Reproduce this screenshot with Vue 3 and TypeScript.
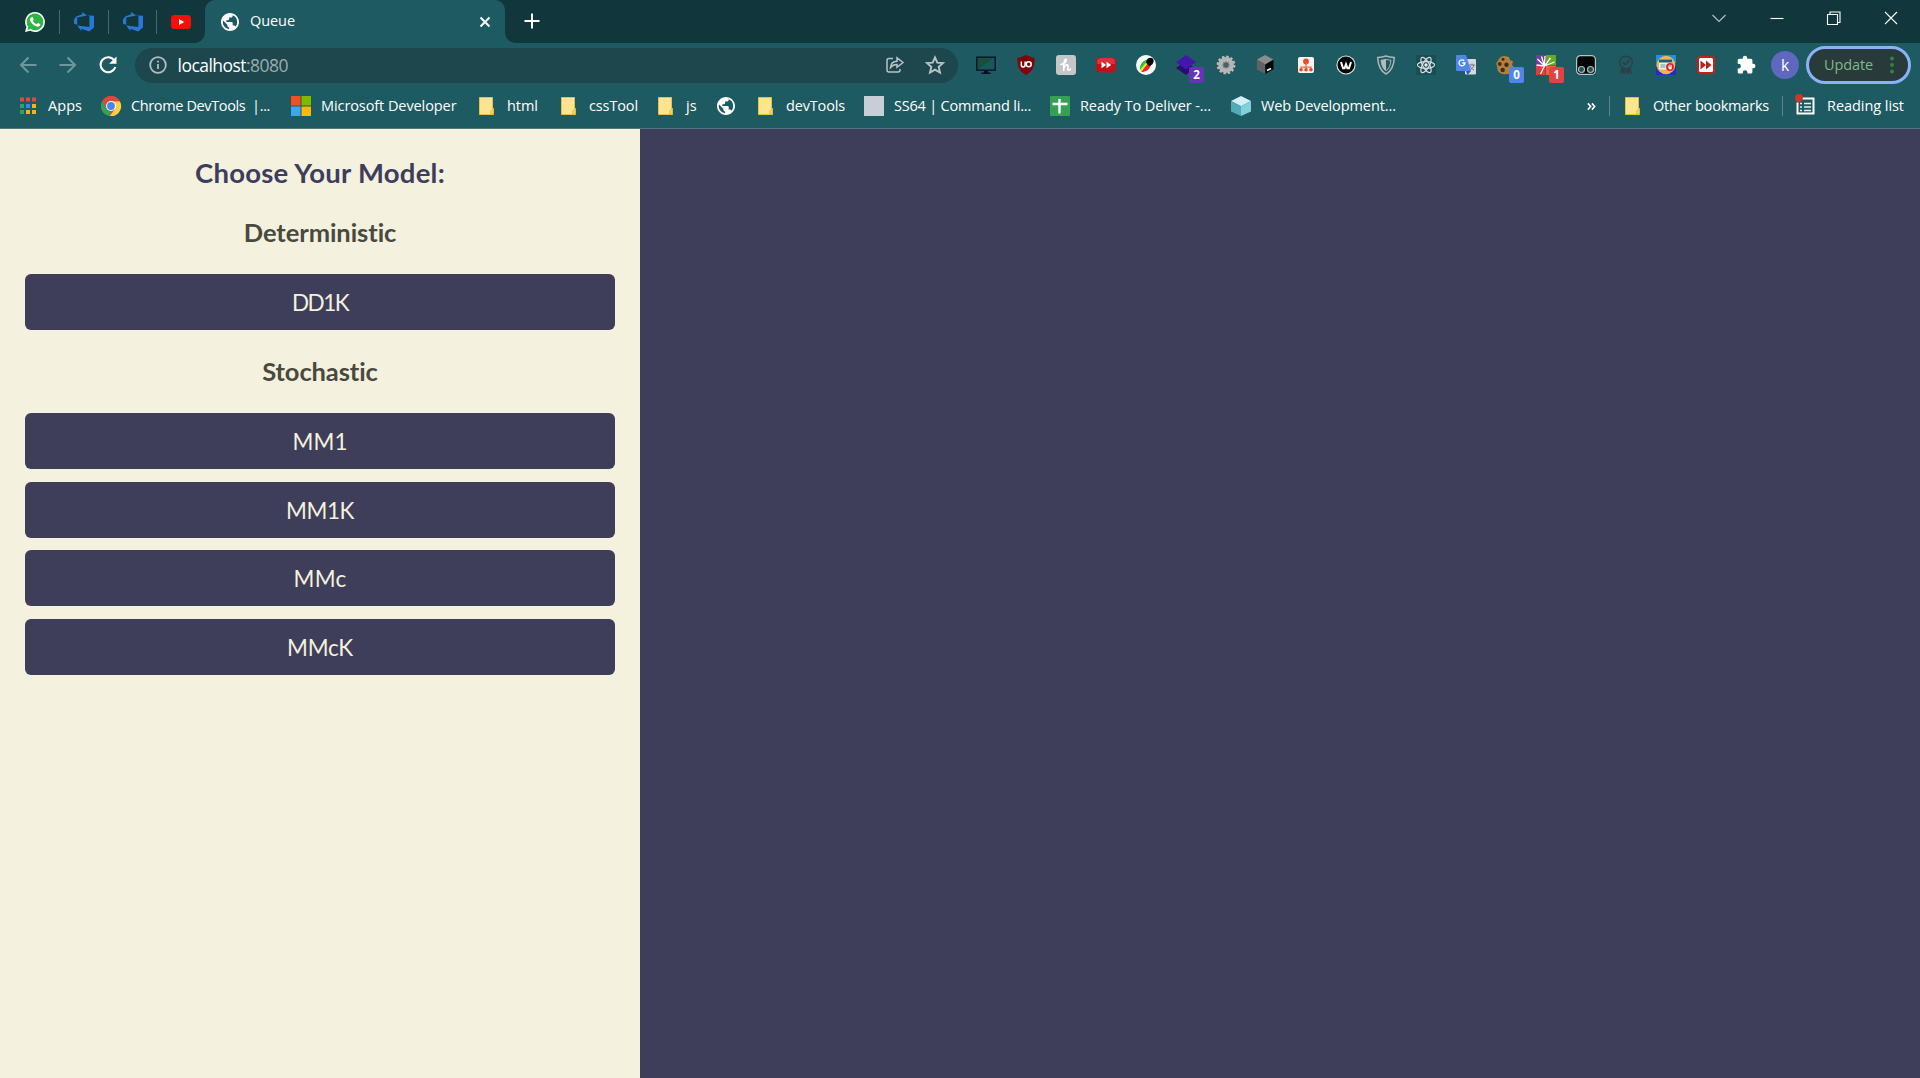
<script setup lang="ts">
import type { Directive } from 'vue'

interface Bookmark {
  icon: string
  label: string
  width: number
  text: number
}

interface Extension {
  name: string
  badge?: string
  tone?: string
}

// Spreads a label's letters so that it takes up its designed width.
const vFit: Directive<HTMLElement, number> = {
  mounted(el, binding) {
    if (!binding.value) return
    const natural = el.getBoundingClientRect().width
    const count = (el.textContent ?? '').length
    if (count > 0) el.style.letterSpacing = `${(binding.value - natural) / count}px`
  },
}

const globe =
  '<path transform="translate(-.8 -.8) scale(.9)" d="M12 2C6.480 2 2 6.480 2 12s4.480 10 10 10 10-4.480 10-10S17.520 2 12 2zm-1 17.930c-3.950-.490-7-3.850-7-7.930 0-.620.080-1.210.210-1.790L9 15v1c0 1.100.900 2 2 2v1.930zm6.900-2.540c-.260-.810-1-1.390-1.900-1.390h-1v-3c0-.550-.450-1-1-1H8v-2h2c.550 0 1-.450 1-1V7h2c1.100 0 2-.900 2-2v-.410c2.930 1.190 5 4.060 5 7.410 0 2.080-.800 3.970-2.100 5.390z" fill="#fff"/>'

const devops =
  '<path d="M0 7.4 2.2 4.6 8.2 2.3V0l4.9 3.6-9.9 2v7.1L0 11.8ZM20 3.7v11.7L15.2 19.4 7.4 16.8v2.5L3.2 13.4l12.2 1.5V4.3L13.1 3.6Z" fill="#2878d8"/>'

const icons: Record<string, string> = {
  whatsapp:
    '<path d="M10 0a10 10 0 1 1-4.8 18.8L0 20l1.4-5A10 10 0 0 1 10 0Z" fill="#f7fff7"/><path d="M10.1 1.5a8.4 8.4 0 1 1-4.5 15.6l-3.2.8.9-3.1A8.4 8.4 0 0 1 10.1 1.5Z" fill="#2db742"/><path d="M6.7 5.2c.5-.3 1-.2 1.2.3l.8 1.8c.1.4-.7 1.2-.8 1.4.9 1.8 2 2.7 3.8 3.5.3 0 1-1.3 1.4-1.2l2 1c.5.3.1 1.6-.5 2.1-2 1.5-5.300-.2-7.100-2-2.200-2.200-3.200-4.500-1.900-6.200Z" fill="#fff"/>',
  devops,
  youtube: '<rect y="3" width="20" height="14" rx="3.500" fill="#f80d0d"/><path d="m8 7 5.300 3L8 13Z" fill="#fff"/>',
  globe,
  apps:
    '<path d="M2 1.500h4v4H2z M8 1.500h4v4H8z M14 1.500h4v4h-4z" fill="#e8453c"/><path d="M2 8h4v4H2z M2 14h4v4H2z" fill="#35a057"/><path d="M8 8h4v4H8z" fill="#3b83ee"/><path d="M14 8h4v4h-4z M8 14h4v4H8z M14 14h4v4h-4z" fill="#f6b50c"/>',
  chrome:
    '<circle cx="10" cy="10" r="10" fill="#e04a3f"/><path d="M1.300 5 5.700 12.500 10 15 8.900 20A10 10 0 0 1 1.300 5Z" fill="#34a155"/><path d="M10 5.200h8.800A10 10 0 0 1 8.900 20l5.300-7.600Z" fill="#fdd13d"/><path d="M10 5.200h8.800a10 10 0 0 0-17.500-.200L5.700 12.500Z" fill="#dd493e"/><circle cx="10" cy="10" r="4.900" fill="#fff"/><circle cx="10" cy="10" r="3.900" fill="#4285f4"/>',
  microsoft:
    '<path d="M0 0h9.500v9.500H0Z" fill="#f25022"/><path d="M10.500 0H20v9.500h-9.500Z" fill="#7fba00"/><path d="M0 10.500h9.500V20H0Z" fill="#3aa7f2"/><path d="M10.500 10.500H20V20h-9.500Z" fill="#ffb900"/>',
  folder:
    '<path d="M2.500 1.500h13v11h1v6h-14Z" fill="#fde48f" stroke="#e0c44a"/><path d="M13.800 17.800v-3l2.700-2.400v5.600Z" fill="#f7d75c" stroke="#d9b93b" stroke-width=".8"/>',
  blank: '<rect width="20" height="20" fill="#c8ced8"/>',
  plus: '<rect width="20" height="20" rx="1" fill="#36a154"/><path d="M9.500 3v14.500M2.500 8h15" stroke="#fff" stroke-width="2.400"/>',
  cube: '<path d="m10 0 10 5-10 5.200L0 5Z" fill="#d3eff7"/><path d="m0 5 10 5.200V20L0 15.500Z" fill="#52acb6"/><path d="m20 5-10 5.200V20l10-4.500Z" fill="#82d0dc"/>',
  reading:
    '<path d="M5 2.500h13.500v15H2.500v-11" fill="none" stroke="#fff" stroke-width="2"/><path d="M5 7.500h2m2 0h7M5 11h2m2 0h7M5 14.500h2m2 0h7" stroke="#e8f0f0" stroke-width="1.600"/><circle cx="4" cy="2" r="3.900" fill="#d23428"/>',
  monitor:
    '<rect x=".8" y="2.200" width="18.400" height="13" fill="#1b5756" stroke="#0d1530" stroke-width="1.500"/><path d="M2 3.500h15.500L2 14Z" fill="#174f3c"/><path d="M8 15.500h4v2h2.500V19h-9v-1.500H8Z" fill="#0d0d2b"/>',
  ublock:
    '<path d="M10 0c2.500 1.500 5.500 2.400 8.500 2.800C19 11 17 16 10 20 3 16 1 11 1.500 2.800 4.500 2.400 7.500 1.500 10 0Z" fill="#800407"/><path d="M5.300 6.500v3.600q0 1.900 1.900 1.900t1.900-1.900V6.500" fill="none" stroke="#fff" stroke-width="1.500"/><circle cx="12.700" cy="9.300" r="2.500" fill="none" stroke="#fff" stroke-width="1.500"/>',
  honey:
    '<rect width="20" height="20" rx="3" fill="#c4c6c7"/><path d="M5 9.500C8.500 9 11 6 10.300 4.500 9.300 3.300 8 6 7.800 9.500V15.500" fill="none" stroke="#fff" stroke-width="1.600" stroke-linecap="round"/><path d="M7.900 12.500C9 10 11.500 8.800 12 10.500c.3 1.500-1 4.600.6 4.800.8 0 1.400-.5 1.900-1.200" fill="none" stroke="#fff" stroke-width="1.600" stroke-linecap="round"/>',
  forward:
    '<rect y="2.500" width="20" height="15" rx="4" fill="#c21219"/><path d="M1 7q0-4 4-4h10q4 0 4 4v2H1Z" fill="#dc3138"/><path d="m5.500 6.700 4.700 3.300-4.700 3.300Zm5 0 4.700 3.300-4.700 3.300Z" fill="#fff"/>',
  picker:
    '<circle cx="10" cy="10" r="10" fill="#fff"/><path d="M3.800 14C4 9 6.500 6 11 4.500L12.500 7 5 15.500Z" fill="#2dc23a"/><path d="M4 14.800 11.500 6l1.500 2-7.500 9Z" fill="#f4e51d"/><path d="m5.300 17 7.200-9.500 2.500 2.500c-1.500 4.500-5 7-9.700 7Z" fill="#e8242d"/><path d="M10 7.500C10.500 3.500 14 1.500 17.200 3.700 18.500 7 16.800 10.300 13 11Z" fill="#0b0b0b"/>',
  layers:
    '<path d="m0 13 10-7 8 7-8 7Z" fill="#2b0a72"/><path d="m10 0 10 7-10 7.500L0 7.300Z" fill="#4516ad"/>',
  gear:
    '<circle cx="10" cy="11" r="8.300" fill="none" stroke="#38494a" stroke-width="2" stroke-dasharray="2.300 2.040"/><circle cx="10" cy="10" r="8.300" fill="none" stroke="#bcbcbc" stroke-width="2.200" stroke-dasharray="2.500 1.840"/><circle cx="10" cy="10" r="5.600" fill="none" stroke="#b5b5b5" stroke-width="4.600"/><circle cx="10" cy="10" r="3" fill="#496165" stroke="#858585" stroke-width="1"/>',
  terminal:
    '<path d="m9 0 8.500 4.500L9.300 9.500 1 4.500Z" fill="#8c8c8c"/><path d="m1 4.500 8.300 5V19L1 14.500Z" fill="#626262"/><path d="M9.300 9.500 17.500 4.500v9.700L9.300 19Z" fill="#080808"/><path d="m11 15.500 4-2" stroke="#fff" stroke-width="1.500"/>',
  sitemap:
    '<rect x="2" y="2" width="16" height="16" rx="2" fill="#f7f4f0"/><circle cx="10" cy="6.500" r="2.900" fill="#e64c28"/><path d="M10 8v6M5 14.500v-2.300h10v2.300" fill="none" stroke="#ec6a49" stroke-width="1.200"/><circle cx="5" cy="14.800" r="1.800" fill="#e64c28"/><circle cx="10" cy="14.800" r="1.800" fill="#e64c28"/><circle cx="15" cy="14.800" r="1.800" fill="#e64c28"/>',
  whats:
    '<circle cx="10" cy="10" r="9.600" fill="#dfe6e6"/><circle cx="10" cy="10" r="8.500" fill="#050505"/><path d="m5 7 2 6.200h1.600l1.400-4 1.400 4H13L15 7" fill="none" stroke="#fff" stroke-width="2"/>',
  shield:
    '<path d="M10 1c2.500 1 5 1.400 8.300 1.400C18 11 15.500 16 10 19 4.500 16 2 11 1.700 2.400 5 2.400 7.500 2 10 1Z" fill="none" stroke="#aeb5b7" stroke-width="1.500"/><path d="M10 4.300c1.700.6 3.300.800 5 .9C14.500 10.500 13 13.700 10 15.700 7 13.700 5.500 10.500 5 5.200 6.700 5.100 8.300 4.900 10 4.300Z" fill="none" stroke="#aeb5b7"/><path d="M10 4.300v11.400C7 13.700 5.500 10.500 5 5.200Z" fill="#b4babc"/>',
  react:
    '<rect width="20" height="20" fill="#1b4d54"/><g fill="none" stroke="#d6dede" stroke-width="1.200"><ellipse cx="10" cy="10" rx="8.600" ry="3.300"/><ellipse cx="10" cy="10" rx="8.600" ry="3.300" transform="rotate(60 10 10)"/><ellipse cx="10" cy="10" rx="8.600" ry="3.300" transform="rotate(120 10 10)"/></g><circle cx="10" cy="10" r="1.700" fill="#e8eeee"/>',
  translate:
    '<rect x="9" y="4" width="11" height="15.500" rx="1" fill="#d6d8da"/><path d="M13 10h6m-3-1.500V10m2 0c-.6 2.700-2.500 4-4.500 5M14 11c.7 1.900 2 3 4 4" fill="none" stroke="#6c7c82"/><path d="M1 0h9l5 16H1q-1 0-1-1V1q0-1 1-1Z" fill="#4d86ed"/><path d="m10 16 5 0-3.500 4Z" fill="#3458b2"/><path d="M8.200 5.800A3 3 0 1 0 9 8H6.300" fill="none" stroke="#fff" stroke-width="1.300"/>',
  cookie:
    '<path d="M8.500 1 13 2l1 3 3 1.200L16 10l3 3c0 4-4.200 6.500-8.500 6C5 20 1 17 1.200 12 0 10 0 7 2 6 3 2.600 5.300 1 8.500 1Z" fill="#b67f3e"/><circle cx="7" cy="4.200" r="1.500" fill="#3e2b20"/><circle cx="3.800" cy="9" r="1.900" fill="#3e2b20"/><circle cx="10.500" cy="9.700" r="2.200" fill="#3e2b20"/><circle cx="6.700" cy="15" r="2.200" fill="#3e2b20"/>',
  burst:
    '<path d="M0 0h9.500v10.500H0Z" fill="#6e3fa0"/><path d="M10 0h10v10.500H10Z" fill="#68a824"/><path d="M0 11h9.500v9H0Z" fill="#e53b3b"/><path d="M10 11h10v9H10Z" fill="#ea6438"/><path d="m8.500 11-7-7m7 7-3-9.500m3 9.500L9 1m-.5 10 6-8m-6 8 10-4m-10 4-8-1m8 1-4 8" stroke="#fff" stroke-width="1.300"/>',
  monkey:
    '<rect x=".6" y=".6" width="18.800" height="18.800" rx="4" fill="#050505" stroke="#b5c4c5" stroke-width="1.200"/><circle cx="5.500" cy="14.500" r="3" fill="#1e5057" stroke="#a9babb" stroke-width="1.200"/><circle cx="14.500" cy="14.500" r="3" fill="#1e5057" stroke="#a9babb" stroke-width="1.200"/>',
  ribbon:
    '<circle cx="10" cy="7.500" r="6.300" fill="none" stroke="#303f45" stroke-width="1.500"/><path d="m7 7.500 2.200 2.200L13.500 5" fill="none" stroke="#303f45" stroke-width="1.500"/><path d="m5.500 12-1.500 7 3-1.300L9 19.500l1-5 1 5 2-1.800 3 1.300-1.500-7-4.500 1.800Z" fill="#303f45"/>',
  blocker:
    '<path d="M0 0h20v20H0Z" fill="#1e8fe5"/><path d="M0 12 20 8v12H0Z" fill="#1f2fc4"/><circle cx="10" cy="10" r="9.300" fill="#efb450"/><rect x="3" y="4.500" width="13" height="10" rx="1" fill="#f4efdf"/><path d="M3 4.500h13v3H3Z" fill="#265f6c"/><path d="M4.500 9h5v4h-5Z" fill="#9cc8cb"/><circle cx="14" cy="12" r="3.900" fill="#df1d22"/><path d="M12.800 12.500v-2m1.200 1.500V9.500m1.300 2.500v-2m-2.500 2.500h2.500v1.500h-2Z" stroke="#fff" fill="#fff" stroke-width=".9"/>',
  skip:
    '<rect x=".7" y=".7" width="18.600" height="18.600" rx="4" fill="#b72520"/><rect x="3" y="3" width="14" height="14" rx="1.500" fill="#fff"/><path d="m4.500 5.500 5.500 4.500-5.500 4.500Zm5.500 0 5.500 4.500-5.500 4.500Z" fill="#b72520"/>',
  puzzle:
    '<path d="M1.700 5.300q0-1.500 1.500-1.500h3.600V3a2.200 2.200 0 0 1 4.400 0v.8h3.700q1.500 0 1.500 1.500v3.500h.8a2.200 2.200 0 0 1 0 4.500h-.8V17q0 1.500-1.500 1.500h-3.400v-.8a2.400 2.400 0 0 0-4.800 0v.8H3.200Q1.700 18.500 1.700 17v-3.400h.8a2.400 2.400 0 0 0 0-4.800h-.8Z" fill="#fff"/>',
}

const pinned: string[] = ['whatsapp', 'devops', 'devops', 'youtube']

const bookmarks: Bookmark[] = [
  { icon: 'apps', label: 'Apps', width: 83, text: 34 },
  { icon: 'chrome', label: 'Chrome DevTools  |...', width: 190, text: 139 },
  { icon: 'microsoft', label: 'Microsoft Developer', width: 186, text: 135.5 },
  { icon: 'folder', label: 'html', width: 82, text: 31 },
  { icon: 'folder', label: 'cssTool', width: 97, text: 49 },
  { icon: 'folder', label: 'js', width: 60, text: 11 },
  { icon: 'globe', label: '', width: 40, text: 0 },
  { icon: 'folder', label: 'devTools', width: 108, text: 59 },
  { icon: 'blank', label: 'SS64 | Command li...', width: 186, text: 137 },
  { icon: 'plus', label: 'Ready To Deliver -...', width: 181, text: 131 },
  { icon: 'cube', label: 'Web Development...', width: 180, text: 135 },
]

const extensions: Extension[] = [
  { name: 'monitor' },
  { name: 'ublock' },
  { name: 'honey' },
  { name: 'forward' },
  { name: 'picker' },
  { name: 'layers', badge: '2', tone: 'violet' },
  { name: 'gear' },
  { name: 'terminal' },
  { name: 'sitemap' },
  { name: 'whats' },
  { name: 'shield' },
  { name: 'react' },
  { name: 'translate' },
  { name: 'cookie', badge: '0', tone: 'blue' },
  { name: 'burst', badge: '1', tone: 'red' },
  { name: 'monkey' },
  { name: 'ribbon' },
  { name: 'blocker' },
  { name: 'skip' },
  { name: 'puzzle' },
]

const deterministic = [{ name: 'DD1K', text: 56 }]
const stochastic = [
  { name: 'MM1', text: 55 },
  { name: 'MM1K', text: 68 },
  { name: 'MMc', text: 53 },
  { name: 'MMcK', text: 66 },
]
</script>

<template>
  <div class="window">
    <header class="chrome">
      <div class="tabstrip">
        <div v-for="(tab, i) in pinned" :key="i" class="pinned">
          <svg class="icon" viewBox="0 0 20 20" v-html="icons[tab]"></svg>
        </div>
        <div class="tab">
          <svg class="icon" viewBox="0 0 20 20" v-html="icons.globe"></svg>
          <span class="tab-title"><span v-fit="45">Queue</span></span>
          <svg class="tab-close" viewBox="0 0 12 12"><path d="m1.500 1.500 9 9m0-9-9 9" /></svg>
        </div>
        <svg class="new-tab" viewBox="0 0 16 16"><path d="M8 .5v15M.5 8h15" /></svg>
        <div class="controls">
          <svg viewBox="0 0 14 14"><path d="m.5 4 6.500 6.500L13.500 4" stroke="#b5c5c7" /></svg>
          <svg viewBox="0 0 14 14"><path d="M.5 7.500h13" /></svg>
          <svg viewBox="0 0 14 14"><path d="M.5 3.500h10v10H.5ZM3 3V1h10v10.500H11" /></svg>
          <svg viewBox="0 0 14 14"><path d="m1 1 12 12m0-12L1 13" /></svg>
        </div>
      </div>

      <div class="toolbar">
        <svg class="nav dim" viewBox="0 0 20 20"><path d="M18.500 10H3m7.500-7.500L3 10l7.500 7.500" /></svg>
        <svg class="nav dim" viewBox="0 0 20 20"><path d="M1.500 10H17M9.500 2.500 17 10l-7.500 7.500" /></svg>
        <svg class="nav" viewBox="0 0 20 20">
          <path d="M16.500 5.800A7.500 7.500 0 1 0 17.300 12" />
          <path d="M18.500 1.500v7.300h-7.300Z" fill="#fff" stroke="none" />
        </svg>
        <div class="omnibox">
          <svg class="info" viewBox="0 0 18 18">
            <circle cx="9" cy="9" r="7.800" /><path d="M9 8v5M9 4.700v1.800" />
          </svg>
          <span class="url"><span v-fit="110.500">localhost<span class="port">:8080</span></span></span>
          <svg class="action" viewBox="0 0 20 20">
            <path d="M8 3.500H4q-2 0-2 2V15q0 2 2 2h9q2 0 2-2v-1" />
            <path d="M5.500 12.500c.3-4 2.500-6.200 6.500-6.300V2.800L18 7.500 12 12.300V9.400C9 9.400 7.200 10.300 5.500 12.500Z" />
          </svg>
          <svg class="action star" viewBox="0 0 20 20">
            <path d="m10 2.300 2.300 5.300 5.700.5-4.300 3.800 1.300 5.700-5-3-5 3 1.300-5.700L2 8.100l5.700-.5Z" />
          </svg>
        </div>
        <div class="extensions">
          <div v-for="ext in extensions" :key="ext.name" class="extension">
            <svg class="icon" viewBox="0 0 20 20" v-html="icons[ext.name]"></svg>
            <span v-if="ext.badge" class="badge" :class="ext.tone">{{ ext.badge }}</span>
          </div>
        </div>
        <div class="avatar">k</div>
        <div class="update">
          <span v-fit="49">Update</span>
          <svg viewBox="0 0 4 18"><circle cx="2" cy="2.500" r="1.900" /><circle cx="2" cy="9" r="1.900" /><circle cx="2" cy="15.500" r="1.900" /></svg>
        </div>
      </div>

      <nav class="bookmarks">
        <div
          v-for="mark in bookmarks"
          :key="mark.icon + mark.label"
          class="bookmark"
          :style="{ width: mark.width + 'px' }"
        >
          <svg class="icon" viewBox="0 0 20 20" v-html="icons[mark.icon]"></svg>
          <span v-fit="mark.text" class="label">{{ mark.label }}</span>
        </div>
        <div class="bookmarks-end">
          <svg class="more" viewBox="0 0 10 10"><path d="m1 1.500 3 3.500-3 3.500M5.500 1.500l3 3.500-3 3.500" /></svg>
          <i class="divider"></i>
          <div class="bookmark other">
            <svg class="icon" viewBox="0 0 20 20" v-html="icons.folder"></svg>
            <span v-fit="116" class="label">Other bookmarks</span>
          </div>
          <i class="divider"></i>
          <div class="bookmark reading">
            <svg class="icon" viewBox="0 0 20 20" v-html="icons.reading"></svg>
            <span v-fit="77" class="label">Reading list</span>
          </div>
        </div>
      </nav>
    </header>

    <main class="page">
      <aside class="sidebar">
        <h1><span v-fit="250">Choose Your Model:</span></h1>
        <h2><span v-fit="153">Deterministic</span></h2>
        <div class="models">
          <button v-for="m in deterministic" :key="m.name"><span v-fit="m.text">{{ m.name }}</span></button>
        </div>
        <h2><span v-fit="116">Stochastic</span></h2>
        <div class="models">
          <button v-for="m in stochastic" :key="m.name"><span v-fit="m.text">{{ m.name }}</span></button>
        </div>
      </aside>
      <section class="stage"></section>
    </main>
  </div>
</template>

<style>
body {
  margin: 0;
  overflow: hidden;
}
</style>

<style scoped>
* {
  box-sizing: border-box;
}
.window {
  width: 1920px;
  height: 1078px;
  display: flex;
  flex-direction: column;
  font-family: "Open Sans", "Noto Sans", sans-serif;
  font-size: 14.5px;
  color: #fff;
  white-space: pre;
}
svg {
  flex: none;
  display: block;
  fill: none;
  stroke: none;
  overflow: visible;
}
.icon {
  width: 20px;
  height: 20px;
}
.chrome {
  height: 129px;
  flex: none;
  background: #1e5a61;
  border-bottom: 1px solid #4b7b80;
}
.tabstrip {
  height: 43px;
  display: flex;
  background: #11373d;
  padding-left: 11px;
}
.pinned {
  width: 49px;
  height: 43px;
  display: flex;
  align-items: center;
  padding-left: 14px;
  background: linear-gradient(#4b686d, #4b686d) right 0 top 10px / 1px 24px no-repeat;
}
.pinned:nth-child(3) {
  width: 48px;
}
.pinned:nth-child(4) {
  width: 48px;
  background: none;
}
.tab {
  position: relative;
  width: 300px;
  display: flex;
  align-items: center;
  padding-left: 15px;
  background: #1e5a61;
  border-radius: 10px 10px 0 0;
}
.tab::before,
.tab::after {
  content: "";
  position: absolute;
  bottom: 0;
  width: 10px;
  height: 10px;
}
.tab::before {
  left: -10px;
  background: radial-gradient(circle at 0 0, transparent 9.5px, #1e5a61 10px);
}
.tab::after {
  right: -10px;
  background: radial-gradient(circle at 100% 0, transparent 9.5px, #1e5a61 10px);
}
.tab-title {
  flex: 1;
  margin-left: 10px;
  padding-bottom: 2px;
}
.tab-close {
  width: 12px;
  height: 12px;
  margin-right: 14px;
  stroke: #fff;
  stroke-width: 2;
}
.new-tab {
  width: 16px;
  height: 16px;
  margin: 13px 0 0 19px;
  stroke: #fff;
  stroke-width: 2;
}
.controls {
  display: flex;
  margin: 11px 22px 0 auto;
  gap: 43px;
}
.controls svg {
  width: 14px;
  height: 14px;
  stroke: #fff;
  stroke-width: 1.1;
}
.controls svg:first-child {
  margin-right: 1px;
}
.toolbar {
  height: 44px;
  display: flex;
  align-items: center;
  padding-left: 18px;
}
.nav {
  width: 20px;
  height: 20px;
  margin-right: 20px;
  stroke: #fff;
  stroke-width: 2.100;
}
.nav.dim {
  stroke: #6e979c;
}
.omnibox {
  width: 823px;
  height: 35px;
  margin-left: -3px;
  display: flex;
  align-items: center;
  padding: 0 13px 0 14px;
  border-radius: 18px;
  background: #1d464d;
}
.info {
  width: 18px;
  height: 18px;
  stroke: #b3bcbe;
  stroke-width: 1.800;
}
.url {
  flex: 1;
  margin-left: 10.500px;
  font-size: 17.500px;
}
.port {
  color: #9cadb0;
}
.action {
  width: 20px;
  height: 20px;
  margin-left: 20px;
  stroke: #b9c4c6;
  stroke-width: 1.500;
}
.star {
  stroke-width: 1.900;
}
.extensions {
  display: flex;
  gap: 20px;
  margin-left: 18px;
}
.extension {
  position: relative;
}
.badge {
  position: absolute;
  left: 13px;
  top: 12px;
  width: 15px;
  height: 16px;
  border-radius: 2px;
  font: 700 11.500px/16px "Open Sans", sans-serif;
  text-align: center;
}
.violet {
  background: #6534b8;
}
.blue {
  background: #4f85ed;
}
.red {
  background: #e04343;
}
.avatar {
  width: 28px;
  height: 28px;
  flex: none;
  margin-left: 15px;
  border-radius: 50%;
  background: #5f67bf;
  font-size: 15.500px;
  line-height: 28px;
  text-align: center;
}
.update {
  width: 105px;
  height: 38px;
  flex: none;
  margin-left: 7px;
  display: flex;
  align-items: center;
  justify-content: space-between;
  padding: 0 14px 1px 15px;
  border: 3px solid #8ab2f5;
  border-radius: 19px;
  background: #283a39;
  color: #7db98a;
}
.update svg {
  width: 4px;
  height: 18px;
  fill: #34873c;
}
.bookmarks {
  height: 38px;
  display: flex;
  align-items: center;
  padding-left: 18px;
}
.bookmark {
  display: flex;
  flex: none;
  align-items: center;
  gap: 10px;
}
.label {
  padding-bottom: 2px;
}
.bookmarks-end {
  margin-left: auto;
  display: flex;
  align-items: center;
}
.more {
  width: 9px;
  height: 9px;
  margin-right: 13px;
  stroke: #fff;
  stroke-width: 1.800;
}
.divider {
  width: 1px;
  height: 20px;
  background: #5a8489;
}
.other {
  margin-left: 13px;
  width: 159px;
}
.reading {
  margin-left: 12px;
  gap: 12px;
  width: 125px;
}
.page {
  flex: 1;
  display: flex;
}
.sidebar {
  width: 640px;
  padding: 24px 25px 0;
  background: #f4f1de;
  font-family: Lato, sans-serif;
  text-align: center;
}
h1,
h2 {
  margin: 0;
  font-weight: 700;
}
h1 {
  height: 40px;
  font-size: 27.500px;
  line-height: 40px;
  color: #3d3d5c;
}
h2 {
  height: 81px;
  font-size: 25.500px;
  line-height: 79px;
  color: #4a493f;
}
.models {
  display: flex;
  flex-direction: column;
  gap: 12.600px;
}
h2 + .models + h2 {
  height: 83px;
  line-height: 82px;
}
button {
  display: block;
  width: 590px;
  height: 56px;
  padding: 0;
  border: 0;
  border-radius: 6px;
  background: #3e3e5b;
  color: #f4f1de;
  font: 400 22.500px/57px Lato, sans-serif;
}
.stage {
  flex: 1;
  background: #3e3e5b;
}
</style>
